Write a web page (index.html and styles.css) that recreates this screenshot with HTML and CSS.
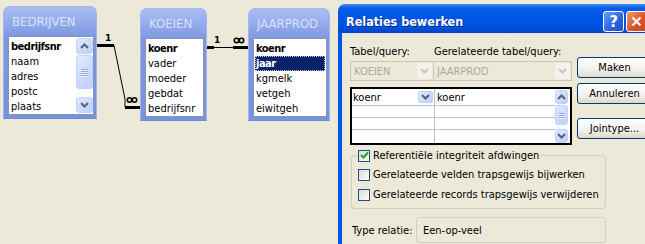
FILE: index.html
```html
<!DOCTYPE html>
<html lang="nl">
<head>
    <meta charset="UTF-8">
    <meta name="viewport" content="width=device-width, initial-scale=1.0">
    <title>Relaties</title>
    <link rel="stylesheet" href="styles.css">
</head>
<body>
<div class="desk">
    <svg class="links" width="645" height="244" viewBox="0 0 645 244">
        <g stroke="#000" fill="none">
            <path d="M97 45.5H114" stroke-width="3"/>
            <path d="M114 45.5L125 99V107" stroke-width="1"/>
            <path d="M125 107.5H140" stroke-width="3"/>
            <circle cx="129.5" cy="100" r="2.2" stroke-width="1.6"/>
            <circle cx="134.5" cy="100" r="2.2" stroke-width="1.6"/>
            <path d="M207 47.5H214" stroke-width="3"/>
            <path d="M214 47.5H233" stroke-width="1"/>
            <path d="M233 47.5H248" stroke-width="3"/>
            <circle cx="236.5" cy="40.5" r="2.2" stroke-width="1.6"/>
            <circle cx="241.5" cy="40.5" r="2.2" stroke-width="1.6"/>
        </g>
        <text x="105" y="41" class="one">1</text>
        <text x="214" y="43" class="one">1</text>
    </svg>

    <div class="tbl tbl-bedrijven">
        <div class="tbl-title">BEDRIJVEN</div>
        <div class="tbl-list">
            <ul class="fields">
                <li class="pk">bedrijfsnr</li>
                <li>naam</li>
                <li>adres</li>
                <li>postc</li>
                <li>plaats</li>
            </ul>
            <div class="vscroll">
                <span class="sb-btn"><svg width="9" height="6"><path d="M1 5l3.5-3.5L8 5" stroke="#4D6185" stroke-width="2" fill="none"/></svg></span>
                <span class="sb-thumb"><i></i><i></i><i></i><i></i></span>
                <span class="sb-track"></span>
                <span class="sb-btn"><svg width="9" height="6"><path d="M1 1l3.5 3.5L8 1" stroke="#4D6185" stroke-width="2" fill="none"/></svg></span>
            </div>
        </div>
    </div>

    <div class="tbl tbl-koeien">
        <div class="tbl-title">KOEIEN</div>
        <div class="tbl-list">
            <ul class="fields">
                <li class="pk">koenr</li>
                <li>vader</li>
                <li>moeder</li>
                <li>gebdat</li>
                <li>bedrijfsnr</li>
            </ul>
        </div>
    </div>

    <div class="tbl tbl-jaarprod">
        <div class="tbl-title">JAARPROD</div>
        <div class="tbl-list">
            <ul class="fields">
                <li class="pk">koenr</li>
                <li class="pk sel">jaar</li>
                <li>kgmelk</li>
                <li>vetgeh</li>
                <li>eiwitgeh</li>
            </ul>
        </div>
    </div>

    <div class="dialog">
        <div class="titlebar">
            <span class="caption">Relaties bewerken</span>
            <span class="tb-btn help">?</span>
            <span class="tb-btn close"><svg width="11" height="11"><path d="M1.5 1.5l8 8M9.5 1.5l-8 8" stroke="#fff" stroke-width="2.2"/></svg></span>
        </div>
        <div class="dlg-body">
            <div class="top">
                <div class="main">
                    <div class="labels">
                        <span class="col1">Tabel/query:</span>
                        <span>Gerelateerde tabel/query:</span>
                    </div>
                    <div class="combos">
                        <div class="combo col1">KOEIEN<span class="combo-arrow"><svg width="9" height="6"><path d="M1 1l3.5 3.5L8 1" stroke="#C9C7BA" stroke-width="2" fill="none"/></svg></span></div>
                        <div class="combo wide">JAARPROD<span class="combo-arrow"><svg width="9" height="6"><path d="M1 1l3.5 3.5L8 1" stroke="#C9C7BA" stroke-width="2" fill="none"/></svg></span></div>
                    </div>
                    <div class="grid">
                        <div class="cells">
                            <div class="cell left">koenr<span class="cell-arrow"><svg width="9" height="6"><path d="M1 1l3.5 3.5L8 1" stroke="#4D6185" stroke-width="2" fill="none"/></svg></span></div>
                            <div class="cell">koenr</div>
                            <div class="cell left"></div>
                            <div class="cell"></div>
                            <div class="cell left"></div>
                            <div class="cell"></div>
                            <div class="cell left last"></div>
                            <div class="cell last"></div>
                        </div>
                        <div class="vscroll small">
                            <span class="sb-btn"><svg width="9" height="6"><path d="M1 5l3.5-3.5L8 5" stroke="#4D6185" stroke-width="2" fill="none"/></svg></span>
                            <span class="sb-thumb"><i></i><i></i><i></i></span>
                            <span class="sb-track"></span>
                            <span class="sb-btn"><svg width="9" height="6"><path d="M1 1l3.5 3.5L8 1" stroke="#4D6185" stroke-width="2" fill="none"/></svg></span>
                        </div>
                    </div>
                </div>
                <div class="buttons">
                    <span class="btn">Maken</span>
                    <span class="btn">Annuleren</span>
                    <span class="btn gap">Jointype...</span>
                </div>
            </div>

            <fieldset class="group">
                <legend class="check"><span class="box"><svg width="9" height="9"><path d="M1 4l2.5 2.5L8 1.5" stroke="#21A121" stroke-width="2" fill="none"/></svg></span>Referentiële integriteit afdwingen</legend>
                <div class="check first"><span class="box"></span>Gerelateerde velden trapsgewijs bijwerken</div>
                <div class="check"><span class="box"></span>Gerelateerde records trapsgewijs verwijderen</div>
            </fieldset>

            <div class="type-row">
                <span class="type-label">Type relatie:</span>
                <span class="type-box">Een-op-veel</span>
            </div>
        </div>
    </div>
</div>
</body>
</html>
```

FILE: styles.css
```css
body {
    margin: 0;
    background-color: #ece9d8;
    font-family: "DejaVu Sans Condensed", "DejaVu Sans", sans-serif;
    font-size: 11px;
    color: #000;
}
.desk {
    position: relative;
    width: 645px;
    height: 244px;
    overflow: hidden;
}
.links {
    position: absolute;
    left: 0;
    top: 0;
}
.one {
    font: bold 9px "DejaVu Sans", sans-serif;
}

/* table windows */
.tbl {
    position: absolute;
    box-sizing: border-box;
    height: 113px;
    padding: 0 2px 3px 4px;
    border: 1px solid #a3b6f0;
    border-bottom-color: #6f8ad6;
    border-radius: 7px 7px 0 0;
    background: linear-gradient(#abbdf3 0, #93aaeb 16px, #7c97e0 30px, #7893de);
}
.tbl-bedrijven { left: 3px; top: 6px; width: 94px; }
.tbl-koeien { left: 140px; top: 8px; width: 67px; }
.tbl-jaarprod { left: 248px; top: 8px; width: 82px; }
.tbl-title {
    height: 29px;
    line-height: 30px;
    padding-left: 4px;
    color: #d9e2fa;
    font-size: 13px;
    white-space: nowrap;
}
.tbl-list {
    display: flex;
    box-sizing: border-box;
    height: 79px;
    background: #fff;
    border: 1px solid #8a94b0;
}
.fields {
    flex: 1;
    list-style: none;
    margin: 0;
    padding: 2px 1px 0 1px;
    overflow: hidden;
}
.fields li {
    height: 15px;
    line-height: 15px;
    padding-left: 1px;
    white-space: nowrap;
}
.fields .pk {
    font-weight: bold;
    letter-spacing: -0.5px;
}
.fields .sel {
    background: #0a246a;
    color: #fff;
    outline: 1px dotted #c8c8c8;
    outline-offset: -1px;
}

/* scrollbars */
.vscroll {
    display: flex;
    flex-direction: column;
    width: 17px;
    padding: 1px 0;
    background: #fbfbf8;
}
.vscroll.small {
    width: 13px;
    margin: 1px 2px 0 0;
    padding: 0;
    height: 53px;
}
.sb-btn, .sb-thumb, .cell-arrow {
    display: flex;
    align-items: center;
    justify-content: center;
    box-sizing: border-box;
    border: 1px solid #c2d2fb;
    border-radius: 3px;
    background: linear-gradient(135deg, #e0eafe, #bccff7);
}
.sb-btn { height: 16px; }
.sb-thumb {
    flex-direction: column;
    gap: 1px;
    height: 34px;
    margin-top: 1px;
}
.sb-thumb i {
    width: 7px;
    height: 1px;
    background: #8ea6e4;
    box-shadow: 0 1px #eef3fe;
}
.sb-track { flex: 1; }
.small .sb-btn { height: 14px; }
.small .sb-thumb { height: 20px; }
.small .sb-thumb i { width: 5px; }

/* dialog */
.dialog {
    position: absolute;
    left: 338px;
    top: 4px;
    width: 330px;
    height: 262px;
    background: #ece9d8;
    border-radius: 7px 7px 0 0;
    overflow: hidden;
}
.titlebar {
    display: flex;
    align-items: center;
    box-sizing: border-box;
    height: 29px;
    padding: 6px 21px 0 8px;
    color: #fff;
    background: linear-gradient(#3d8ef6 0, #0a5eea 4px, #0055e5 45%, #0052e0 80%, #0044c6);
}
.caption {
    flex: 1;
    font: bold 12.5px "DejaVu Sans Condensed", "DejaVu Sans", sans-serif;
    text-shadow: 1px 1px #0b2a8e;
}
.tb-btn {
    display: flex;
    align-items: center;
    justify-content: center;
    box-sizing: border-box;
    width: 21px;
    height: 21px;
    margin-left: 2px;
    border: 1px solid #fff;
    border-radius: 3px;
}
.help {
    background: linear-gradient(135deg, #6d9cf8, #2a63e4 60%, #1b4fd0);
    font: bold 15px "DejaVu Sans", sans-serif;
}
.close {
    background: linear-gradient(135deg, #ee9a76, #d9562b 55%, #c84318);
}
.dlg-body {
    height: 240px;
    padding: 12px 0 0 8px;
    border-left: 4px solid #0055e5;
}
.top {
    display: flex;
    gap: 5px;
}
.main {
    width: 222px;
}
.labels {
    display: flex;
    height: 14px;
    line-height: 14px;
    white-space: nowrap;
}
.col1 {
    width: 84px;
    flex: none;
}
.combos {
    display: flex;
    margin-top: 2px;
}
.combo {
    display: flex;
    align-items: center;
    box-sizing: border-box;
    height: 20px;
    padding: 0 1px 0 3px;
    border: 1px solid #c9c7ba;
    color: #aca899;
    justify-content: space-between;
}
.combo.wide {
    width: 138px;
    border-left: none;
}
.combo-arrow {
    display: flex;
    align-items: center;
    justify-content: center;
    width: 15px;
    height: 16px;
    background: #f4f2ea;
    border-radius: 2px;
}
.grid {
    display: flex;
    box-sizing: border-box;
    height: 58px;
    margin-top: 6px;
    border: 2px solid #000;
    background: #fff;
}
.cells {
    flex: 1;
    display: grid;
    grid-template-columns: 83px 1fr;
    grid-template-rows: 17px 12px 12px 13px;
}
.cell {
    display: flex;
    align-items: center;
    padding-left: 2px;
    border-bottom: 1px solid #c0c0c0;
}
.cell.left {
    border-right: 1px solid #c0c0c0;
    justify-content: space-between;
    padding-left: 1px;
}
.cell.last {
    border-bottom: none;
}
.cell-arrow {
    width: 15px;
    height: 12px;
    margin-right: 1px;
    border-radius: 2px;
}
.buttons {
    display: flex;
    flex-direction: column;
    gap: 5px;
}
.btn {
    display: flex;
    align-items: center;
    justify-content: center;
    box-sizing: border-box;
    width: 75px;
    height: 21px;
    border: 1px solid #003c74;
    border-radius: 3px;
    background: linear-gradient(#ffffff, #f4f3ee 55%, #dcd8cb);
}
.btn:first-child {
    margin-top: 12px;
}
.btn.gap {
    margin-top: 9px;
}

/* options */
.group {
    box-sizing: border-box;
    width: 255px;
    margin: 4px 0 0 1px;
    padding: 0 0 6px 6px;
    border: 1px solid #d0d0bf;
    border-radius: 4px;
}
.check {
    display: flex;
    align-items: center;
    gap: 3px;
    height: 14px;
    line-height: 14px;
    white-space: nowrap;
}
legend.check {
    height: 13px;
    padding: 0 2px 0 0;
}
.check.first {
    margin-top: 11px;
}
.check + .check {
    margin-top: 6px;
}
.box {
    display: flex;
    align-items: center;
    justify-content: center;
    box-sizing: border-box;
    width: 12px;
    height: 12px;
    border: 1px solid #1c5180;
    background: linear-gradient(135deg, #dcdcd5, #fbfbf9);
}
.type-row {
    display: flex;
    align-items: center;
    margin-top: 8px;
    padding-left: 2px;
}
.type-label {
    width: 64px;
}
.type-box {
    display: flex;
    align-items: center;
    box-sizing: border-box;
    width: 190px;
    height: 26px;
    padding-left: 6px;
    border: 1px solid #d0d0bf;
    border-radius: 3px;
}
```
